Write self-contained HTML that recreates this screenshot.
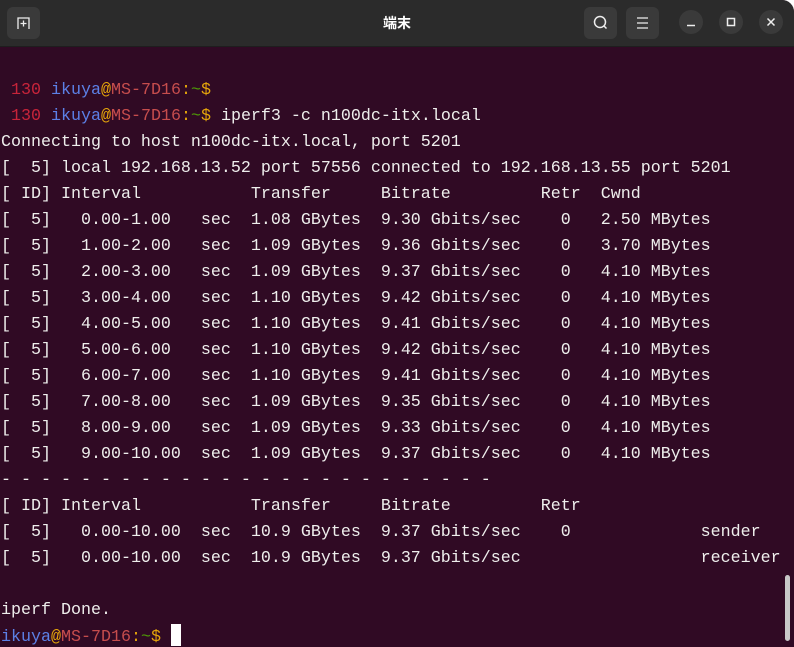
<!DOCTYPE html>
<html><head><meta charset="utf-8"><style>
html,body{margin:0;padding:0;background:#fff;}
body{width:794px;height:647px;overflow:hidden;position:relative;}
.win{position:absolute;left:0;top:0;width:794px;height:647px;background:#300a24;border-top-right-radius:12px;overflow:hidden;}
.hdr{position:absolute;left:0;top:0;width:794px;height:46px;background:#2b2b2b;border-bottom:1px solid #1e1e1e;}
.btn{position:absolute;top:7px;width:33px;height:32px;background:#3a3a3a;border-radius:6px;}
.cb{position:absolute;top:10px;width:24px;height:24px;border-radius:50%;background:#3a3a3a;}
.title{position:absolute;left:0;width:794px;top:13px;text-align:center;color:#fff;font:bold 14px "Liberation Sans","Noto Sans CJK JP",sans-serif;}
pre{position:absolute;left:1px;top:78px;margin:0;font:16.67px/26px "Liberation Mono",monospace;color:#eeeeec;}
.r{color:#c7243a}.b{color:#5c80e6}.o{color:#e5a50a}.m{color:#c64d4d}.g{color:#4e9a06}
.cur{display:inline-block;width:10px;height:22px;background:#fff;vertical-align:-5px;}
.sb{position:absolute;left:785px;top:575px;width:5px;height:66px;border-radius:3px;background:#c8c8c8;}
</style></head><body><div class="win">
<div class="hdr">
 <div class="btn" style="left:7px"><svg width="33" height="32"><path d="M11 22V11h11v11M16.5 13.5v6M13.5 16.5h6" stroke="#eee" stroke-width="1.3" fill="none"/></svg></div>
 <div class="title">端末</div>
 <div class="btn" style="left:584px"><svg width="33" height="32"><circle cx="16" cy="15" r="5.5" stroke="#eee" stroke-width="1.5" fill="none"/><path d="M19.5 18.5l3 3" stroke="#eee" stroke-width="1.5"/></svg></div>
 <div class="btn" style="left:626px"><svg width="33" height="32"><path d="M11 11h11M11 16h11M11 21h11" stroke="#eee" stroke-width="1.3"/></svg></div>
 <div class="cb" style="left:679px"><svg width="24" height="24"><path d="M8 15.5h8" stroke="#eee" stroke-width="1.5"/></svg></div>
 <div class="cb" style="left:719px"><svg width="24" height="24"><rect x="8.5" y="8.5" width="7" height="7" stroke="#eee" stroke-width="1.5" fill="none"/></svg></div>
 <div class="cb" style="left:759px"><svg width="24" height="24"><path d="M8.5 8.5l7 7M15.5 8.5l-7 7" stroke="#eee" stroke-width="1.5"/></svg></div>
</div>
<pre> <span class="r">130</span> <span class="b">ikuya</span><span class="o">@</span><span class="m">MS-7D16</span><span class="o">:</span><span class="g">~</span><span class="o">$</span>
 <span class="r">130</span> <span class="b">ikuya</span><span class="o">@</span><span class="m">MS-7D16</span><span class="o">:</span><span class="g">~</span><span class="o">$</span> iperf3 -c n100dc-itx.local
Connecting to host n100dc-itx.local, port 5201
[  5] local 192.168.13.52 port 57556 connected to 192.168.13.55 port 5201
[ ID] Interval           Transfer     Bitrate         Retr  Cwnd
[  5]   0.00-1.00   sec  1.08 GBytes  9.30 Gbits/sec    0   2.50 MBytes
[  5]   1.00-2.00   sec  1.09 GBytes  9.36 Gbits/sec    0   3.70 MBytes
[  5]   2.00-3.00   sec  1.09 GBytes  9.37 Gbits/sec    0   4.10 MBytes
[  5]   3.00-4.00   sec  1.10 GBytes  9.42 Gbits/sec    0   4.10 MBytes
[  5]   4.00-5.00   sec  1.10 GBytes  9.41 Gbits/sec    0   4.10 MBytes
[  5]   5.00-6.00   sec  1.10 GBytes  9.42 Gbits/sec    0   4.10 MBytes
[  5]   6.00-7.00   sec  1.10 GBytes  9.41 Gbits/sec    0   4.10 MBytes
[  5]   7.00-8.00   sec  1.09 GBytes  9.35 Gbits/sec    0   4.10 MBytes
[  5]   8.00-9.00   sec  1.09 GBytes  9.33 Gbits/sec    0   4.10 MBytes
[  5]   9.00-10.00  sec  1.09 GBytes  9.37 Gbits/sec    0   4.10 MBytes
- - - - - - - - - - - - - - - - - - - - - - - - -
[ ID] Interval           Transfer     Bitrate         Retr
[  5]   0.00-10.00  sec  10.9 GBytes  9.37 Gbits/sec    0             sender
[  5]   0.00-10.00  sec  10.9 GBytes  9.37 Gbits/sec                  receiver

iperf Done.
<span class="b">ikuya</span><span class="o">@</span><span class="m">MS-7D16</span><span class="o">:</span><span class="g">~</span><span class="o">$</span> <span class="cur"></span></pre>
<div class="sb"></div>
</div></body></html>
